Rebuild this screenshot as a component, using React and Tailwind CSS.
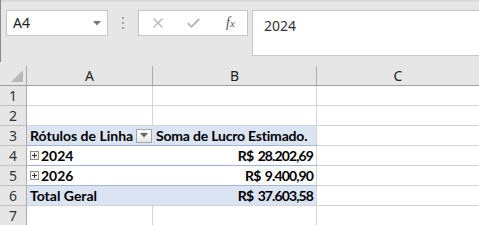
import React from 'react'

const uiFont = "font-['Noto_Sans','Liberation_Sans',sans-serif]"
const cellFont = "font-['Lato','Liberation_Sans',sans-serif]"

function PlusBox() {
  return (
    <span className="inline-flex items-center justify-center w-[9px] h-[9px] border border-[#8c8c8c] bg-[#f4f4f4] mr-[2px] shrink-0">
      <svg width="7" height="7" viewBox="0 0 7 7">
        <path d="M1 3.5h5M3.5 1v5" stroke="#333" strokeWidth="1" />
      </svg>
    </span>
  )
}

function FilterButton() {
  return (
    <span className="flex items-center justify-center w-[16px] h-[14px] border border-[#a6a6a6] bg-gradient-to-b from-white to-[#e8e8e8] mr-[1px] shrink-0">
      <svg width="8" height="5" viewBox="0 0 8 5">
        <path d="M0 0h8L4 4.5z" fill="#666" />
      </svg>
    </span>
  )
}

const rows = [
  { n: 1 },
  { n: 2 },
  { n: 3, a: 'Rótulos de Linha', b: 'Soma de Lucro Estimado.', head: true },
  { n: 4, a: '2024', b: 'R$ 28.202,69', plus: true },
  { n: 5, a: '2026', b: 'R$ 9.400,90', plus: true },
  { n: 6, a: 'Total Geral', b: 'R$ 37.603,58', total: true },
  { n: 7 },
]

export default function App() {
  return (
    <div className={`w-[479px] h-[225px] overflow-hidden bg-[#e6e6e6] ${uiFont}`}>
      {/* formula bar */}
      <div className="h-[62px] flex items-start border-l border-[#8a8a8a] bg-gradient-to-b from-[#d2d2d2] via-[#e6e6e6] via-[4%] to-[#e6e6e6]">
        <div className="ml-[5px] mt-[10px] w-[102px] h-[26px] bg-white border border-[#c6c6c6] flex items-center pl-[6px] pr-[6px] justify-between">
          <span className="text-[14px] text-[#222] leading-none">A4</span>
          <svg width="8" height="5" viewBox="0 0 8 5"><path d="M0 0h8L4 4.5z" fill="#777" /></svg>
        </div>
        <div className="ml-[14px] mt-[17px] flex flex-col gap-[3px]">
          <span className="w-[2px] h-[2px] bg-[#a0a0a0]" />
          <span className="w-[2px] h-[2px] bg-[#a0a0a0]" />
          <span className="w-[2px] h-[2px] bg-[#a0a0a0]" />
        </div>
        <div className="ml-[14px] mt-[10px] w-[110px] h-[26px] bg-white border border-[#c6c6c6] flex items-center">
          <svg className="ml-[14px]" width="10" height="10" viewBox="0 0 10 10">
            <path d="M0.5 0.5l9 9M9.5 0.5l-9 9" stroke="#b4b4b4" strokeWidth="1.2" />
          </svg>
          <svg className="ml-[24px]" width="13" height="10" viewBox="0 0 13 10">
            <path d="M0.8 5.2l3.6 3.6L12.2 1" stroke="#b4b4b4" strokeWidth="1.8" fill="none" />
          </svg>
          <span className="ml-[26px] text-[14px] italic text-[#555] font-['Liberation_Serif',serif] leading-none">
            f<span className="text-[11px]">x</span>
          </span>
        </div>
        <div className="ml-[4px] mt-[10px] flex-1 h-[46px] bg-white border border-r-0 border-[#c6c6c6] pl-[11px] pt-[2px]">
          <span className="text-[14px] leading-[20px] text-[#333]">2024</span>
        </div>
      </div>

      {/* column headers */}
      <div className="h-[24px] flex items-end border-b border-[#9e9e9e]">
        <div className="w-[27px] h-[19px] border-r border-[#ababab] flex items-end justify-end pr-[3px] pb-[3px]">
          <svg width="12" height="12" viewBox="0 0 12 12"><path d="M12 0v12H0z" fill="#b9b9b9" /></svg>
        </div>
        <div className="w-[126px] h-[19px] border-r border-[#ababab] text-center text-[14px] leading-[19px] text-[#222]">A</div>
        <div className="w-[164px] h-[19px] border-r border-[#ababab] text-center text-[14px] leading-[19px] text-[#222]">B</div>
        <div className="flex-1 h-[19px] text-center text-[14px] leading-[19px] text-[#222]">C</div>
      </div>

      {/* grid rows */}
      {rows.map(r => {
        const pivot = r.head || r.plus || r.total
        const blueBg = r.head || r.total
        const bottom = r.head || r.plus ? 'border-[#9fb6d9]' : 'border-[#d4d4d4]'
        return (
          <div key={r.n} className="h-[20px] flex">
            <div className="w-[27px] border-r border-b border-r-[#ababab] border-b-[#c0c0c0] bg-[#e6e6e6] text-center text-[14px] leading-[19px] text-[#333]">
              {r.n}
            </div>
            {pivot ? (
              <div className={`w-[290px] flex border-b ${bottom} ${blueBg ? 'bg-[#dbe4f3]' : 'bg-white'} ${cellFont} font-bold text-[14px] text-black whitespace-nowrap`}>
                <div className="w-[126px] flex items-center pl-[3px]">
                  {r.plus && <PlusBox />}
                  <span className="flex-1 leading-none">{r.a}</span>
                  {r.head && <FilterButton />}
                </div>
                <div className={`flex-1 flex items-center pr-[3px] border-r border-[#d4d4d4] ${r.head ? 'justify-start pl-[3px]' : 'justify-end'}`}>
                  <span className={`leading-none ${r.head ? 'tracking-[-0.2px]' : 'tracking-[-0.9px] [word-spacing:2px]'}`}>{r.b}</span>
                </div>
              </div>
            ) : (
              <>
                <div className="w-[126px] bg-white border-r border-b border-[#d4d4d4]" />
                <div className="w-[164px] bg-white border-r border-b border-[#d4d4d4]" />
              </>
            )}
            <div className="flex-1 bg-white border-b border-[#d4d4d4]" />
          </div>
        )
      })}
    </div>
  )
}
